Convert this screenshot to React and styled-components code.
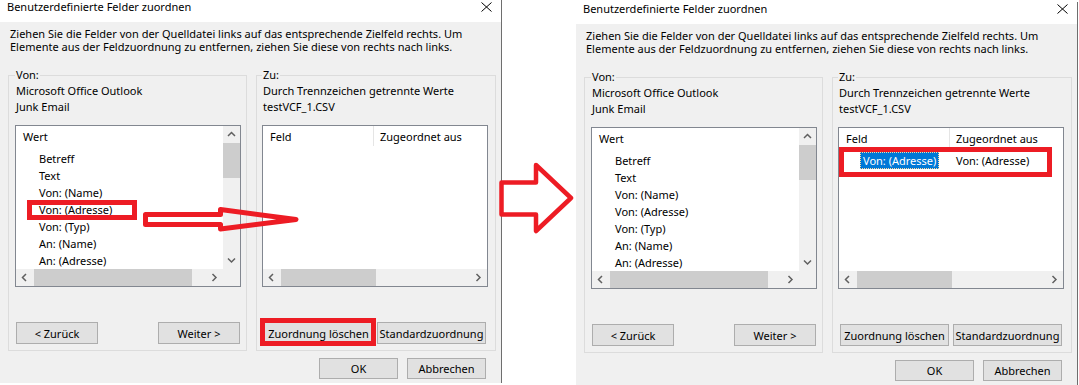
import React from "react";
import styled, { createGlobalStyle } from "styled-components";

const GlobalStyle = createGlobalStyle`
  * { box-sizing: border-box; }
  html, body { margin: 0; padding: 0; background: #fff; }
  body {
    font-family: "Noto Sans", "Open Sans", sans-serif;
    font-size: 11px;
    color: #000;
  }
`;

const RED = "#ed1c24";

const Page = styled.div`
  position: relative;
  display: flex;
  align-items: flex-start;
  width: 1079px;
  height: 385px;
  overflow: hidden;
  background: #fff;
`;

const Window = styled.div`
  flex-shrink: 0;
  display: flex;
  flex-direction: column;
  width: 502px;
  height: 383px;
  margin-top: ${(p) => p.$top}px;
  background: #f0f0f0;
  border-right: 1px solid #6e6e6e;
`;

const Between = styled.div`
  flex-shrink: 0;
  width: 74px;
`;

const TitleBar = styled.div`
  display: flex;
  justify-content: space-between;
  align-items: flex-start;
  height: 22px;
  padding: 0 9px 0 7px;
  background: #fff;
`;

const TitleText = styled.span`
  line-height: 14px;
  white-space: nowrap;
`;

const CloseIcon = styled.svg`
  margin-top: 2px;
`;

const Body = styled.div`
  display: flex;
  flex-direction: column;
  padding: 5px 5px 0 8px;
`;

const Instructions = styled.p`
  margin: 0;
  padding: 0 2px;
  line-height: 13px;
  white-space: nowrap;
`;

const Groups = styled.div`
  display: flex;
  gap: 9px;
  margin-top: 14px;
`;

const GroupBox = styled.fieldset`
  display: flex;
  flex-direction: column;
  min-width: 0;
  width: ${(p) => p.$w}px;
  margin: 0;
  padding: 0 ${(p) => p.$pr}px 6px ${(p) => p.$pl}px;
  border: 1px solid #dcdcdc;
`;

const Legend = styled.legend`
  padding: 0 1px;
  line-height: 16px;
`;

const InfoLine = styled.div`
  padding-left: 1px;
  line-height: 16px;
  white-space: nowrap;
`;

const ListBox = styled.div`
  display: grid;
  grid-template-columns: ${(p) => (p.$vscroll ? "1fr 17px" : "1fr")};
  grid-template-rows: 1fr 17px;
  width: 226px;
  height: 162px;
  margin-top: 10px;
  border: 1px solid #828790;
  background: #fff;
`;

const ListContent = styled.div`
  overflow: hidden;
  min-width: 0;
  min-height: 0;
`;

const HeaderRow = styled.div`
  display: flex;
  height: 22px;
  line-height: 22px;
  margin-bottom: 2px;
`;

const HeaderCell = styled.div`
  flex-shrink: 0;
  height: 20px;
  width: ${(p) => (p.$w ? `${p.$w}px` : "auto")};
  padding-left: ${(p) => p.$pl}px;
  border-right: ${(p) => (p.$divider ? "1px solid #e5e5e5" : "none")};
  white-space: nowrap;
`;

const ItemRow = styled.div`
  display: flex;
  height: 17px;
  line-height: 17px;
  white-space: nowrap;
`;

const ItemCell = styled.div`
  flex-shrink: 0;
  width: ${(p) => (p.$w ? `${p.$w}px` : "auto")};
  padding-left: ${(p) => p.$pl}px;
`;

const Selected = styled.span`
  display: inline-block;
  height: 17px;
  padding: 0 3px;
  background: #0078d7;
  color: #fff;
  outline: 1px dotted #ffd8a0;
  outline-offset: -1px;
`;

const HScroll = styled.div`
  display: flex;
  background: #f0f0f0;
  min-width: 0;
`;

const VScroll = styled.div`
  display: flex;
  flex-direction: column;
  background: #f0f0f0;
  min-height: 0;
`;

const ArrowBox = styled.div`
  flex-shrink: 0;
  display: flex;
  align-items: center;
  justify-content: center;
  width: 17px;
  height: 17px;
`;

const Track = styled.div`
  flex: 1;
  display: flex;
  flex-direction: ${(p) => (p.$vertical ? "column" : "row")};
  min-width: 0;
  min-height: 0;
`;

const Thumb = styled.div`
  flex-shrink: 0;
  background: #cdcdcd;
  ${(p) =>
    p.$vertical
      ? `margin-top:${p.$offset}px; height:${p.$size}px;`
      : `margin-left:${p.$offset}px; width:${p.$size}px;`}
`;

const Corner = styled.div`
  background: #f0f0f0;
`;

const ButtonRow = styled.div`
  display: flex;
  justify-content: ${(p) => p.$justify};
  gap: 4px;
  margin-top: 35px;
  padding: 0 ${(p) => p.$pr}px 0 ${(p) => p.$pl}px;
`;

const WinButton = styled.button`
  flex-shrink: 0;
  width: ${(p) => p.$w}px;
  height: ${(p) => p.$h}px;
  padding: 0;
  border: 1px solid #adadad;
  background: #e1e1e1;
  font: inherit;
  color: #000;
  white-space: nowrap;
`;

const Footer = styled.div`
  display: flex;
  justify-content: flex-end;
  gap: 9px;
  margin-top: 7px;
  padding-right: 10px;
`;

const Overlay = styled.svg`
  position: absolute;
  left: 0;
  top: 0;
  pointer-events: none;
`;

const Chevron = ({ dir }) => {
  const pts = {
    up: "1,5 4.5,1.5 8,5",
    down: "1,1.5 4.5,5 8,1.5",
    left: "5,1 1.5,4.5 5,8",
    right: "1.5,1 5,4.5 1.5,8",
  }[dir];
  const vertical = dir === "up" || dir === "down";
  return (
    <svg width={vertical ? 9 : 7} height={vertical ? 7 : 9} viewBox={vertical ? "0 0 9 7" : "0 0 7 9"}>
      <polyline points={pts} fill="none" stroke="#606060" strokeWidth="1.5" />
    </svg>
  );
};

const HorizontalBar = ({ offset, size }) => (
  <HScroll>
    <ArrowBox>
      <Chevron dir="left" />
    </ArrowBox>
    <Track>
      <Thumb $offset={offset} $size={size} />
    </Track>
    <ArrowBox>
      <Chevron dir="right" />
    </ArrowBox>
  </HScroll>
);

const VerticalBar = ({ offset, size }) => (
  <VScroll>
    <ArrowBox>
      <Chevron dir="up" />
    </ArrowBox>
    <Track $vertical>
      <Thumb $vertical $offset={offset} $size={size} />
    </Track>
    <ArrowBox>
      <Chevron dir="down" />
    </ArrowBox>
  </VScroll>
);

const sourceFields = [
  "Betreff",
  "Text",
  "Von: (Name)",
  "Von: (Adresse)",
  "Von: (Typ)",
  "An: (Name)",
  "An: (Adresse)",
];

const Dialog = ({ top, mapped }) => (
  <Window $top={top}>
    <TitleBar>
      <TitleText>Benutzerdefinierte Felder zuordnen</TitleText>
      <CloseIcon width="11" height="10" viewBox="0 0 11 10">
        <path d="M0.5 0.5 L10.5 9.5 M10.5 0.5 L0.5 9.5" stroke="#000" strokeWidth="1" fill="none" />
      </CloseIcon>
    </TitleBar>
    <Body>
      <Instructions>
        Ziehen Sie die Felder von der Quelldatei links auf das entsprechende Zielfeld rechts. Um
        <br />
        Elemente aus der Feldzuordnung zu entfernen, ziehen Sie diese von rechts nach links.
      </Instructions>
      <Groups>
        <GroupBox $w={239} $pl={6} $pr={5}>
          <Legend>Von:</Legend>
          <InfoLine>Microsoft Office Outlook</InfoLine>
          <InfoLine>Junk Email</InfoLine>
          <ListBox $vscroll>
            <ListContent>
              <HeaderRow>
                <HeaderCell $pl={7}>Wert</HeaderCell>
              </HeaderRow>
              {sourceFields.map((f) => (
                <ItemRow key={f}>
                  <ItemCell $pl={23}>{f}</ItemCell>
                </ItemRow>
              ))}
            </ListContent>
            <VerticalBar offset={0} size={35} />
            <HorizontalBar offset={1} size={158} />
            <Corner />
          </ListBox>
          <ButtonRow $justify="space-between" $pl={1} $pr={1}>
            <WinButton $w={82} $h={22}>&lt; Zurück</WinButton>
            <WinButton $w={82} $h={22}>Weiter &gt;</WinButton>
          </ButtonRow>
        </GroupBox>
        <GroupBox $w={240} $pl={5} $pr={7}>
          <Legend>Zu:</Legend>
          <InfoLine>Durch Trennzeichen getrennte Werte</InfoLine>
          <InfoLine>testVCF_1.CSV</InfoLine>
          <ListBox>
            <ListContent>
              <HeaderRow>
                <HeaderCell $w={111} $pl={7} $divider>
                  Feld
                </HeaderCell>
                <HeaderCell $pl={6}>Zugeordnet aus</HeaderCell>
              </HeaderRow>
              {mapped && (
                <ItemRow>
                  <ItemCell $w={111} $pl={21}>
                    <Selected>Von: (Adresse)</Selected>
                  </ItemCell>
                  <ItemCell $pl={6}>Von: (Adresse)</ItemCell>
                </ItemRow>
              )}
            </ListContent>
            <HorizontalBar offset={1} size={95} />
          </ListBox>
          <ButtonRow $justify="flex-start" $pl={2} $pr={0}>
            <WinButton $w={109} $h={22}>Zuordnung löschen</WinButton>
            <WinButton $w={109} $h={22}>Standardzuordnung</WinButton>
          </ButtonRow>
        </GroupBox>
      </Groups>
      <Footer>
        <WinButton $w={79} $h={21}>OK</WinButton>
        <WinButton $w={79} $h={21}>Abbrechen</WinButton>
      </Footer>
    </Body>
  </Window>
);

export default function App() {
  return (
    <>
      <GlobalStyle />
      <Page>
        <Dialog top={0} mapped={false} />
        <Between />
        <Dialog top={2} mapped />
        <Overlay width="1079" height="385" viewBox="0 0 1079 385">
          <g fill="none" stroke={RED} strokeWidth="5">
            <rect x="29.5" y="202.5" width="105" height="15" />
            <rect x="262.5" y="320.5" width="111" height="23" />
            <rect x="841.5" y="149.5" width="208" height="25" />
          </g>
          <polygon
            points="145.5,214.5 220.5,214.5 220.5,209.5 296,219.5 220.5,229 220.5,224.5 145.5,224.5"
            fill="none"
            stroke={RED}
            strokeWidth="5"
            strokeLinejoin="round"
          />
          <polygon
            points="501.5,182.5 536,182.5 536,165 571,198 536,231 536,214.5 501.5,214.5"
            fill="none"
            stroke={RED}
            strokeWidth="4.5"
            strokeLinejoin="round"
          />
        </Overlay>
      </Page>
    </>
  );
}
